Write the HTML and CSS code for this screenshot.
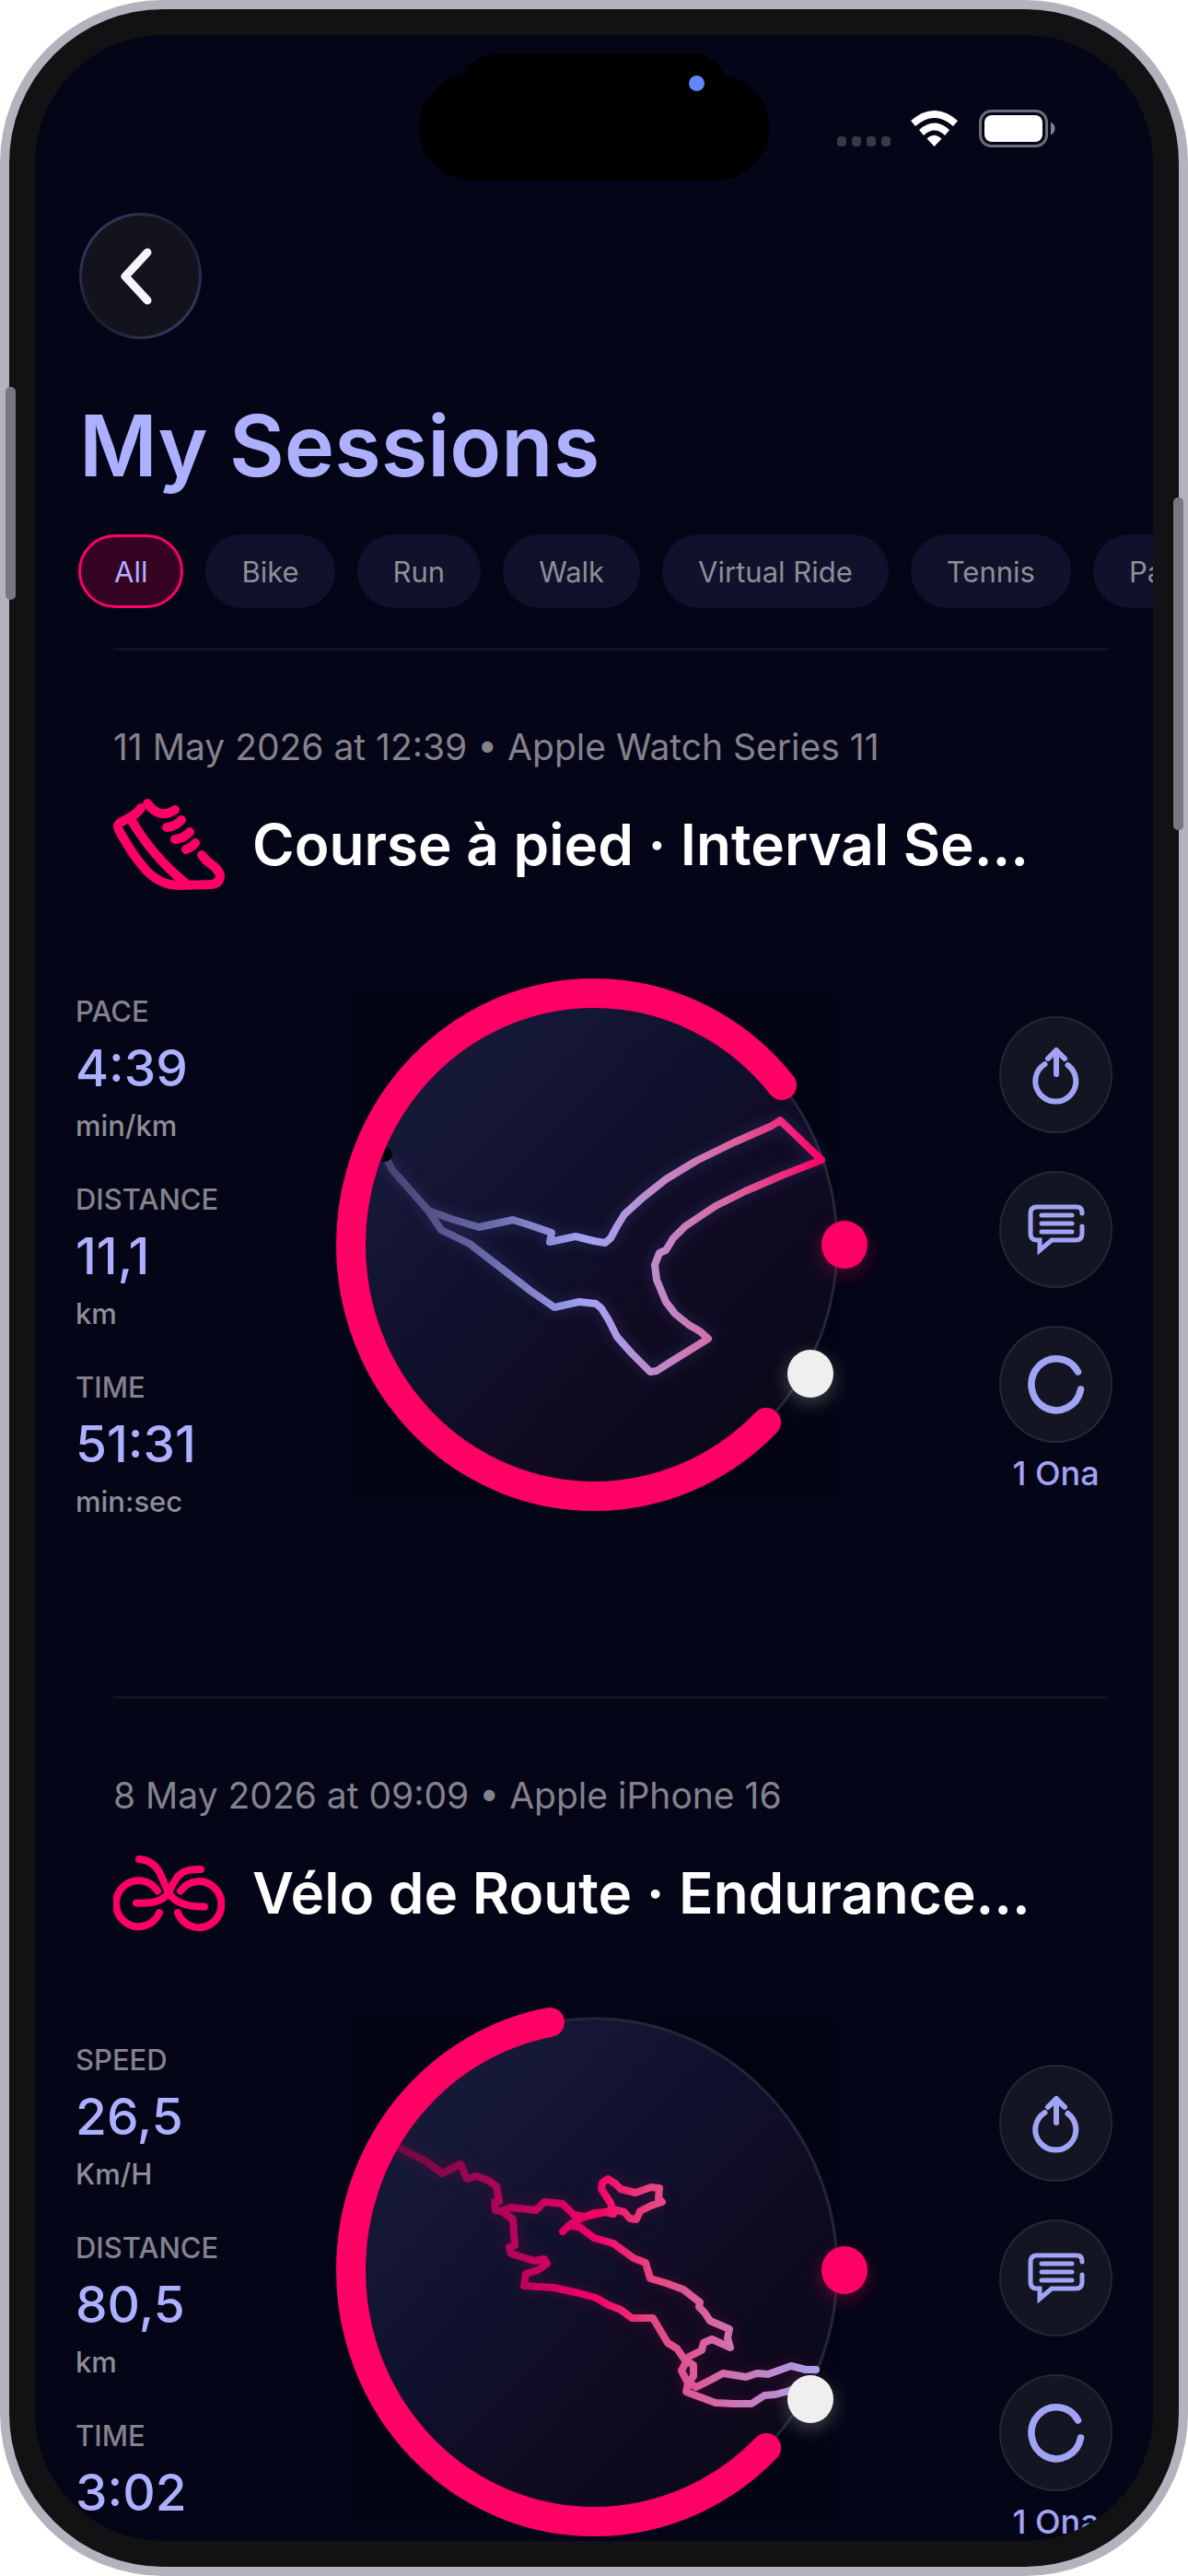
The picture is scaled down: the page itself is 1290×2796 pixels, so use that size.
FILE: index.html
```html
<!DOCTYPE html>
<html lang="en">
<head>
  <meta charset="UTF-8" />
  <meta name="viewport" content="width=device-width, initial-scale=1.0" />
  <title>My Sessions</title>
  <link rel="stylesheet" href="styles.css">
</head>
<body>

<!-- shared icons and gradients -->
<svg class="defs" aria-hidden="true">
  <defs>
    <linearGradient id="disc" x1="0.1" y1="0.1" x2="0.9" y2="0.9">
      <stop offset="0" stop-color="#181b3c" />
      <stop offset="0.45" stop-color="#0f102b" />
      <stop offset="0.62" stop-color="#110b24" />
      <stop offset="1" stop-color="#080917" />
    </linearGradient>
    <linearGradient id="route-run" gradientUnits="userSpaceOnUse" x1="74" y1="0" x2="547" y2="0">
      <stop offset="0" stop-color="#454370" />
      <stop offset="0.22" stop-color="#6666a4" />
      <stop offset="0.46" stop-color="#a2a3f2" />
      <stop offset="0.64" stop-color="#c287c6" />
      <stop offset="0.8" stop-color="#d8649b" />
      <stop offset="1" stop-color="#ff0065" />
    </linearGradient>
    <linearGradient id="route-ride" gradientUnits="userSpaceOnUse" x1="86" y1="0" x2="545" y2="0">
      <stop offset="0" stop-color="#6d0a40" />
      <stop offset="0.28" stop-color="#b8035a" />
      <stop offset="0.47" stop-color="#f40066" />
      <stop offset="0.6" stop-color="#e8437f" />
      <stop offset="0.78" stop-color="#d070ac" />
      <stop offset="1" stop-color="#a5a4f0" />
    </linearGradient>
    <symbol id="icon-share" viewBox="-32 -32 64 64">
      <path d="M0-1V-27M-9-18L0-27L9-18M-12.500-12A22 22 0 1 0 12.500-11" fill="none" stroke="currentColor" stroke-width="6" stroke-linecap="round" stroke-linejoin="round" />
      <path d="M-9-18L0-27L9-18L3-21V-17H-3V-21Z" fill="currentColor" />
    </symbol>
    <symbol id="icon-comment" viewBox="-32 -32 64 64">
      <path d="M28-18V-19Q28-25 22-25H-21Q-28-25-28-18V4Q-28 11-21 11H-18V22L-5 11H21Q28 11 28 4V-4M-16-16H17M-16-7H17M-16 2H17" fill="none" stroke="currentColor" stroke-width="5" stroke-linecap="round" />
    </symbol>
    <symbol id="icon-ona" viewBox="-32 -32 64 64">
      <path d="M23.500-14A27 28 0 1 0 26.500 5" fill="none" stroke="currentColor" stroke-width="7.500" stroke-linecap="round" />
    </symbol>
  </defs>
</svg>

<div class="phone">
  <span class="side-key side-key-left"></span>
  <span class="side-key side-key-right"></span>

  <div class="screen">
    <div class="island"><span class="camera"></span></div>

    <div class="status-bar">
      <div class="signal"><i></i><i></i><i></i><i></i></div>
      <svg class="wifi" viewBox="0 0 51 39" aria-hidden="true">
        <path d="M0 11Q25.500-11 51 11L46 17Q25.500-1 5 17Z" />
        <path d="M9 21Q25.500 6 42 21L37 27Q25.500 16 14 27Z" />
        <path d="M17.500 30.500Q25.500 23 33.500 30.500L25.500 39Z" />
      </svg>
      <svg class="battery" viewBox="0 0 83 41" aria-hidden="true">
        <rect x="1.500" y="1.500" width="72" height="38" rx="12" fill="none" stroke="#6c6c7a" stroke-width="3" />
        <rect x="6" y="6" width="63" height="29" rx="8" fill="#fff" />
        <path d="M78 13.500Q82.500 16 82.500 20.500T78 27.500Z" fill="#83838e" />
      </svg>
    </div>

    <header class="page-header">
      <button class="back" type="button" aria-label="Back">
        <svg viewBox="0 0 40 64" aria-hidden="true">
          <path d="M32 6L8 32L32 58" fill="none" stroke="#f4f4fc" stroke-width="9" stroke-linecap="round" stroke-linejoin="round" />
        </svg>
      </button>
      <h1>My Sessions</h1>
    </header>

    <nav class="filters" aria-label="Sport">
      <button class="chip active" type="button">All</button>
      <button class="chip" type="button">Bike</button>
      <button class="chip" type="button">Run</button>
      <button class="chip" type="button">Walk</button>
      <button class="chip" type="button">Virtual Ride</button>
      <button class="chip" type="button">Tennis</button>
      <button class="chip" type="button">Padel</button>
    </nav>

    <main>
      <article class="session">
        <div class="session-head">
          <p class="date">11 May 2026 at 12:39 • Apple Watch Series 11</p>
          <div class="session-title">
            <svg class="sport" viewBox="0 0 121 99" aria-hidden="true">
              <path d="M30 10Q25 17 18 20L9 25Q3 28 6 34Q22 63 37 79Q52 94 73 94L106 93Q116 92 116 83Q114 77 109 73Q101 68 96 61" />
              <path d="M19 22Q42 62 79 92" />
              <path d="M37 5Q50 23 67 12" />
              <path d="M58 31Q68 30 74 23M67 44Q77 43 83 36M79 55Q85 53 89 48" />
            </svg>
            <h2>Course à pied · Interval Se...</h2>
          </div>
        </div>
        <div class="session-body">
          <dl class="metrics">
            <div><dt>PACE</dt><dd>4:39</dd><dd class="unit">min/km</dd></div>
            <div><dt>DISTANCE</dt><dd>11,1</dd><dd class="unit">km</dd></div>
            <div><dt>TIME</dt><dd>51:31</dd><dd class="unit">min:sec</dd></div>
          </dl>
          <svg class="dial" viewBox="0 0 600 600" role="img" aria-label="Route of the run">
            <rect x="36" y="27" width="528" height="546" fill="#030413" />
            <ellipse cx="300" cy="300" rx="264" ry="273" fill="url(#disc)" stroke="#25253a" stroke-width="3" />
            <path class="route route-run" d="M75 207L81 219L91 230L120 263L145 272L175 281L212 273L231 279L254 287L252 297L280 291L300 296L312 298L318 293L325 280L333 267L354 248L378 229L411 209L452 189L493 171L502 165L522 184L547 208L506 224L464 242L432 258L399 280L386 293L378 306L371 309L366 322L368 338L378 362L388 375L403 387L415 394L424 402L382 428L368 437L361 438L341 418L325 400L316 382L308 369L302 364L284 362L266 366L257 368L231 350L165 299L134 284L120 263" />
            <circle cx="73" cy="202" r="8" fill="#02030f" />
            <path class="ring" d="M487 493A264 273 0 0 1 300 573A264 273 0 0 1 36 300A264 273 0 0 1 300 27A264 273 0 0 1 504 127" />
            <ellipse class="pin pin-end" cx="572" cy="300" rx="25" ry="26" />
            <ellipse class="pin pin-start" cx="535" cy="440" rx="25" ry="26" />
          </svg>
          <div class="actions">
            <button type="button" aria-label="Share"><svg><use href="#icon-share" /></svg></button>
            <button type="button" aria-label="Comments"><svg><use href="#icon-comment" /></svg></button>
            <button type="button" aria-label="Ona"><svg><use href="#icon-ona" /></svg></button>
            <span class="count">1 Ona</span>
          </div>
        </div>
      </article>

      <article class="session session-ride">
        <div class="session-head">
          <p class="date">8 May 2026 at 09:09 • Apple iPhone 16</p>
          <div class="session-title">
            <svg class="sport" viewBox="0 -9 121 99" aria-hidden="true">
              <g stroke-width="8">
                <path d="M28 4Q44 5 51 20L60 40Q69 56 99 55.500" />
                <path d="M95 15Q76 14 69 24Q64 32 60 40Q53 53 25 51.500" />
                <path d="M48 38.500A24.500 25 0 1 0 50 62" />
                <path d="M73 38.500A24.500 25 0 1 1 70 62" />
              </g>
            </svg>
            <h2>Vélo de Route · Endurance...</h2>
          </div>
        </div>
        <div class="session-body">
          <dl class="metrics">
            <div><dt>SPEED</dt><dd>26,5</dd><dd class="unit">Km/H</dd></div>
            <div><dt>DISTANCE</dt><dd>80,5</dd><dd class="unit">km</dd></div>
            <div><dt>TIME</dt><dd>3:02</dd></div>
          </dl>
          <svg class="dial" viewBox="0 0 600 600" role="img" aria-label="Route of the ride">
            <rect x="36" y="27" width="528" height="546" fill="#030413" />
            <ellipse cx="300" cy="300" rx="264" ry="273" fill="url(#disc)" stroke="#25253a" stroke-width="3" />
            <path class="route route-ride" d="M80 163L116 181L126 188L135 195L155 185L162 201L173 198L186 203L194 209L197 225L192 226L193 235L200 236L210 232L237 235L246 226L266 228L278 240L290 242L300 238L312 237L321 239L318 227L308 212L309 205L315 201L323 206L329 212L345 216L362 210L371 211L370 222L374 226L362 230L350 236L346 245L339 244L333 237L321 234L312 237L290 242L276 249L266 258L272 252L284 253L300 265L321 271L343 287L356 292L361 309L378 314L397 321L415 335L414 340L420 346L426 355L447 364L445 374L448 384L428 375L419 379L417 387L403 394L395 409L401 421L411 427L427 419L440 412L465 416L477 412L489 413L514 404L530 408L541 408" />
            <path class="route route-ride" d="M530 423L512 431L497 435L485 436L471 445L452 445L432 444L413 437L400 432L402 423L408 415L408 403L399 398L390 385L380 379L364 352L341 352L329 343L316 338L302 330L284 325L256 319L224 317L226 304L239 300L249 293L246 288L235 290L210 282L208 275L214 273L212 245L200 236" />
            <path class="ring" d="M487 493A264 273 0 0 1 300 573A264 273 0 0 1 36 300A264 273 0 0 1 252 31" />
            <ellipse class="pin pin-end" cx="572" cy="300" rx="25" ry="26" />
            <ellipse class="pin pin-start" cx="535" cy="440" rx="25" ry="26" />
          </svg>
          <div class="actions">
            <button type="button" aria-label="Share"><svg><use href="#icon-share" /></svg></button>
            <button type="button" aria-label="Comments"><svg><use href="#icon-comment" /></svg></button>
            <button type="button" aria-label="Ona"><svg><use href="#icon-ona" /></svg></button>
            <span class="count">1 Ona</span>
          </div>
        </div>
      </article>
    </main>
  </div>
</div>

</body>
</html>
```
FILE: styles.css
```css
:root {
  --screen: #040516;
  --lavender: #adb0ff;
  --pink: #ff0065;
  --muted: #84828c;
  --chip: #10112b;
}

* {
  box-sizing: border-box;
}

body {
  margin: 0;
  background: #fff;
  color: #fff;
  font-family: Inter, "Liberation Sans", sans-serif;
}

h1, h2, p, dl, dd {
  margin: 0;
}

button {
  font-family: inherit;
  cursor: pointer;
}

.defs {
  position: absolute;
  width: 0;
  height: 0;
}

/* device frame */
.phone {
  position: relative;
  height: 100vh;
  padding: 28px;
  background: #121214;
  border: 10px solid #b3b3be;
  border-radius: 177px;
}

.side-key {
  position: absolute;
  width: 11px;
  border-radius: 5px;
  background: #787882;
}
.side-key-left {
  top: 410px;
  left: -4px;
  height: 231px;
}
.side-key-right {
  top: 530px;
  right: -5px;
  height: 361px;
}

.screen {
  position: relative;
  height: 100%;
  overflow: hidden;
  background: var(--screen);
  border-radius: 139px;
}

.island {
  position: absolute;
  top: 42px;
  left: 50%;
  width: 380px;
  height: 116px;
  margin-left: -190px;
  border-radius: 58px;
  background: #000;
}
.island::before {
  content: "";
  position: absolute;
  top: -22px;
  left: 45px;
  width: 290px;
  height: 78px;
  border-radius: 39px;
  background: #000;
}
.camera {
  position: absolute;
  top: 2px;
  left: 293px;
  width: 17px;
  height: 17px;
  border-radius: 50%;
  background: #6485ff;
}

/* status bar */
.status-bar {
  display: flex;
  justify-content: flex-end;
  align-items: flex-start;
  height: 193px;
  padding: 81px 106px 0 0;
}
.signal {
  display: flex;
  gap: 6px;
  margin: 29px 22px 0 0;
}
.signal i {
  width: 10px;
  height: 11px;
  border-radius: 4px;
  background: #373946;
}
.wifi {
  width: 51px;
  height: 39px;
  margin: 1px 23px 0 0;
  fill: #fff;
}
.battery {
  width: 83px;
  height: 41px;
}

/* header */
.page-header {
  padding: 0 48px;
}
.back {
  display: flex;
  align-items: center;
  justify-content: center;
  width: 133px;
  height: 137px;
  padding: 0 10px 0 0;
  border: 3px solid transparent;
  border-radius: 50%;
  background:
    linear-gradient(#13131d, #13131d) padding-box,
    linear-gradient(135deg, #34355e 15%, #1d1d2c 45%, #1d1d2c 55%, #34355e 85%) border-box;
}
.back svg {
  width: 40px;
  height: 64px;
}
h1 {
  margin-top: 58px;
  font-size: 92px;
  line-height: 116px;
  font-weight: 600;
  color: var(--lavender);
}

/* sport filters */
.filters {
  display: flex;
  gap: 24px;
  margin-top: 38px;
  padding-left: 47px;
  overflow: hidden;
}
.chip {
  flex: none;
  height: 80px;
  padding: 0 36px;
  border: 3px solid var(--chip);
  border-radius: 40px;
  background: var(--chip);
  color: #8e8e96;
  font-size: 31px;
}
.chip.active {
  border-color: var(--pink);
  background: #360423;
  color: var(--lavender);
}

/* session list */
main {
  padding-top: 43px;
}
.session-head {
  margin: 0 48px 0 85px;
  padding-top: 82px;
  border-top: 3px solid #10121f;
}
.date {
  font-size: 39px;
  line-height: 46px;
  color: var(--muted);
}
.session-title {
  display: flex;
  align-items: center;
  gap: 30px;
  margin-top: 33px;
}
.sport {
  flex: none;
  width: 121px;
  height: 99px;
  fill: none;
  stroke: var(--pink);
  stroke-width: 10px;
  stroke-linecap: round;
  stroke-linejoin: round;
}
h2 {
  font-size: 62px;
  line-height: 78px;
  font-weight: 600;
  white-space: nowrap;
}

.session-body {
  display: grid;
  grid-template-columns: 1fr 600px 1fr;
  padding: 85px 44px 190px;
}

.metrics {
  display: flex;
  flex-direction: column;
  gap: 44px;
  padding-top: 29px;
}
.metrics dt {
  font-size: 31px;
  line-height: 36px;
  font-weight: 500;
  color: var(--muted);
}
.metrics dd {
  margin-top: 9px;
  font-size: 55px;
  line-height: 68px;
  font-weight: 500;
  color: var(--lavender);
}
.metrics .unit {
  margin-top: 11px;
  font-size: 31px;
  line-height: 36px;
  color: #8e8e98;
}

/* route dial */
.dial {
  width: 600px;
  height: 600px;
  overflow: visible;
}
.session-ride .dial {
  margin-top: -25px;
}
.ring {
  fill: none;
  stroke: var(--pink);
  stroke-width: 32px;
  stroke-linecap: round;
}
.route {
  fill: none;
  stroke-width: 8px;
  stroke-linecap: round;
  stroke-linejoin: round;
}
.route-run {
  stroke: url(#route-run);
  filter: drop-shadow(0 0 8px rgba(120, 110, 230, 0.25));
}
.route-ride {
  stroke: url(#route-ride);
  filter: drop-shadow(0 0 8px rgba(255, 0, 101, 0.2));
}
.pin-end {
  fill: var(--pink);
  filter: drop-shadow(0 6px 10px rgba(255, 0, 101, 0.3));
}
.pin-start {
  fill: #efeff0;
  filter: drop-shadow(0 6px 10px rgba(255, 255, 255, 0.25));
}

.actions {
  display: flex;
  flex-direction: column;
  align-items: center;
  justify-self: end;
  gap: 41px;
  padding-top: 52px;
  color: #a1a3f5;
}
.actions button {
  display: flex;
  align-items: center;
  justify-content: center;
  width: 123px;
  height: 127px;
  padding: 0;
  border: 2px solid #262733;
  border-radius: 50%;
  background: #141522;
  color: inherit;
}
.actions button svg {
  width: 64px;
  height: 66px;
}
.count {
  margin-top: -29px;
  font-size: 36px;
  line-height: 42px;
  font-weight: 500;
}
```
